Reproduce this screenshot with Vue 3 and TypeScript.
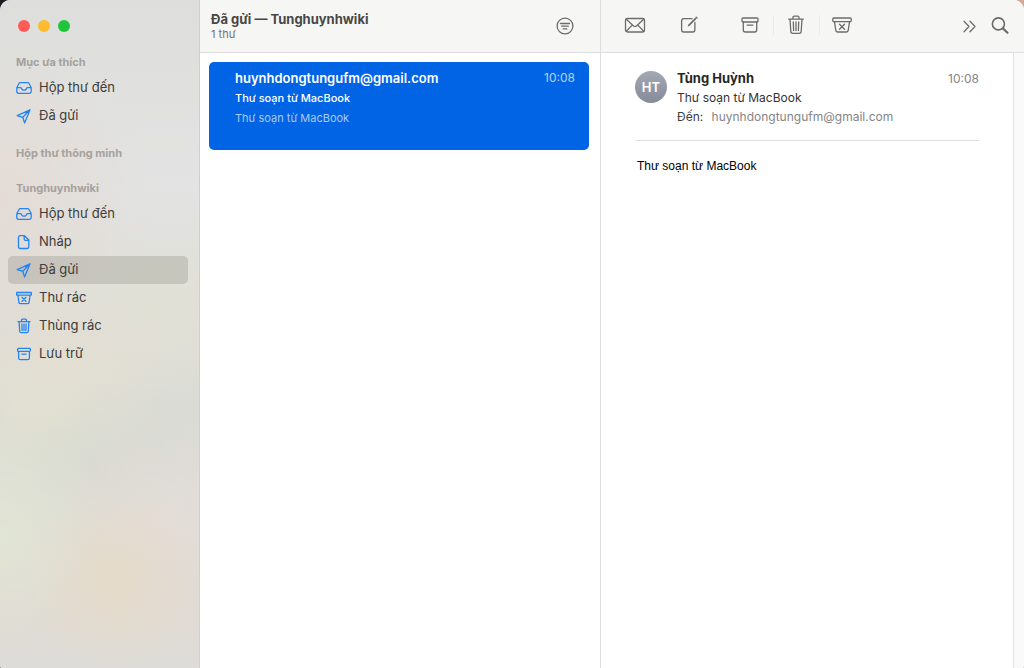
<script setup lang="ts">
import { ref } from 'vue'

type IconName = 'inbox' | 'doc' | 'plane' | 'junk' | 'trash' | 'archive'

interface Mailbox {
  id: string
  label: string
  icon: IconName
}

interface Section {
  title: string
  items: Mailbox[]
}

const selected = ref('sent')

const sections: Section[] = [
  {
    title: 'Mục ưa thích',
    items: [
      { id: 'fav-inbox', label: 'Hộp thư đến', icon: 'inbox' },
      { id: 'fav-sent', label: 'Đã gửi', icon: 'plane' },
    ],
  },
  { title: 'Hộp thư thông minh', items: [] },
  {
    title: 'Tunghuynhwiki',
    items: [
      { id: 'inbox', label: 'Hộp thư đến', icon: 'inbox' },
      { id: 'drafts', label: 'Nháp', icon: 'doc' },
      { id: 'sent', label: 'Đã gửi', icon: 'plane' },
      { id: 'junk', label: 'Thư rác', icon: 'junk' },
      { id: 'trash', label: 'Thùng rác', icon: 'trash' },
      { id: 'archive', label: 'Lưu trữ', icon: 'archive' },
    ],
  },
]

const icons: Record<IconName, string> = {
  inbox: 'M.8 7.700 2.800 3.800Q3.300 2.700 4.500 2.700h7q1.200 0 1.700 1.100L15.200 7.700v3.900q0 1.700-1.700 1.700h-11q-1.700 0-1.700-1.700zM.9 7.700h3.500q.9 0 1.100.8.5 1.700 2.500 1.700t2.500-1.700q.2-.8 1.100-.8h3.500',
  doc: 'M4.200 1.700h4.300l4.300 4.300v6.800q0 1.700-1.700 1.700H4.200q-1.700 0-1.700-1.700V3.400q0-1.700 1.700-1.700zM8.200 1.900v3.200q0 1.200 1.200 1.200h3.200',
  plane: 'M14 1.800 1.200 7.600l5.600 1.700L8.600 15zM14 1.800 6.800 9.300',
  junk: 'M1.200 2.500h13.600q.6 0 .6.600v1.500q0 .6-.6.600H1.200q-.6 0-.6-.6V3.100q0-.6.6-.6zM2 5.300l.9 7q.2 1.300 1.500 1.300h7.200q1.300 0 1.500-1.300l.9-7M6 7.300l4 4M10 7.300l-4 4',
  trash: 'M2 3.600h12M5.500 3.400V2.200q0-1 1-1h3q1 0 1 1v1.200M3.100 3.800l.6 9.400q.1 1.500 1.500 1.500h5.600q1.400 0 1.500-1.500l.6-9.400M5.900 5.800l.2 6.800M8 5.800v6.800M10.100 5.800l-.2 6.800',
  archive: 'M2.400 2.400h11.200q.8 0 .8.800v1.400q0 .8-.8.800H2.400q-.8 0-.8-.8V3.200q0-.8.8-.8zM2.600 5.500v6.400q0 1.700 1.700 1.700h7.400q1.700 0 1.700-1.700V5.500M5.900 8.100h4.200',
}
</script>

<template>
  <div class="window">
    <aside class="sidebar">
      <div class="lights">
        <button class="light close" aria-label="Đóng"></button>
        <button class="light minimize" aria-label="Thu nhỏ"></button>
        <button class="light expand" aria-label="Phóng to"></button>
      </div>
      <nav>
        <section v-for="section in sections" :key="section.title" class="section">
          <h2>{{ section.title }}</h2>
          <button
            v-for="item in section.items"
            :key="item.id"
            class="mailbox"
            :class="{ active: item.id === selected }"
            @click="selected = item.id"
          >
            <svg viewBox="0 0 16 16" width="16" height="16" aria-hidden="true">
              <path :d="icons[item.icon]" />
            </svg>
            <span>{{ item.label }}</span>
          </button>
        </section>
      </nav>
    </aside>

    <section class="list">
      <header class="bar list-bar">
        <div>
          <h1>Đã gửi — Tunghuynhwiki</h1>
          <p class="count">1 thư</p>
        </div>
        <button class="tool" aria-label="Lọc">
          <svg viewBox="0 0 20 20" width="20" height="20">
            <circle cx="10" cy="10" r="7.900" />
            <path d="M5.500 7.500h9M6.700 10.200h6.600M8.200 12.900h3.600" />
          </svg>
        </button>
      </header>
      <article class="message">
        <div class="row">
          <h3>huynhdongtungufm@gmail.com</h3>
          <time>10:08</time>
        </div>
        <p class="subject">Thư soạn từ MacBook</p>
        <p class="preview">Thư soạn từ MacBook</p>
      </article>
    </section>

    <main class="reader">
      <header class="bar tools">
        <button class="tool mail" aria-label="Nhận thư">
          <svg viewBox="0 0 22 20" width="22" height="20">
            <rect x="1.500" y="3.500" width="19" height="13.500" rx="2" />
            <path d="M2.300 4.300l7.300 6.700q1.400 1.100 2.800 0l7.300-6.700M2.300 16.300l5.900-6.200M19.700 16.300l-5.900-6.200" />
          </svg>
        </button>
        <button class="tool compose" aria-label="Soạn thư">
          <svg viewBox="0 0 20 20" width="20" height="20">
            <path d="M13 3.700H4.800Q2.600 3.700 2.600 5.900v8.900q0 2.200 2.200 2.200h8.900q2.200 0 2.200-2.200V7.500" />
            <path d="M8.600 11.600l.6-1.800 7.200-7.200 1.200 1.200-7.200 7.200z" fill="#6c6c6b" stroke="none" />
            <path d="M17.200 2.100l1 1" />
          </svg>
        </button>
        <div class="group">
          <button class="tool" aria-label="Lưu trữ">
            <svg viewBox="0 0 20 20" width="20" height="20">
              <rect x="2" y="3" width="16" height="4" rx="1" />
              <path d="M3.300 7v8q0 2 2 2h9.400q2 0 2-2V7M7.200 10.200h5.600" />
            </svg>
          </button>
          <button class="tool" aria-label="Xoá">
            <svg viewBox="0 0 20 20" width="20" height="20">
              <path d="M2.700 4.200h14.600M7 4V2.400q0-1.300 1.300-1.300h3.400q1.300 0 1.300 1.300V4M4 4.300l.8 12q.1 2 2 2h6.400q1.900 0 2-2L16 4.300M7.300 7l.3 8.600M10 7v8.600M12.700 7l-.3 8.600" />
            </svg>
          </button>
          <button class="tool" aria-label="Thư rác">
            <svg viewBox="0 0 20 20" width="20" height="20">
              <rect x=".8" y="3" width="18.400" height="3.700" rx="1" />
              <path d="M2.500 6.900l1.300 8.400q.3 1.700 2 1.700h8.400q1.700 0 2-1.700l1.300-8.400M7.500 9.200l5 5M12.500 9.200l-5 5" />
            </svg>
          </button>
        </div>
        <button class="tool more" aria-label="Thêm">
          <svg viewBox="0 0 20 20" width="20" height="20">
            <path d="M4 6.300l5 5.200-5 5.200M10 6.300l5 5.200-5 5.200" />
          </svg>
        </button>
        <button class="tool search" aria-label="Tìm kiếm">
          <svg viewBox="0 0 20 20" width="20" height="20">
            <circle cx="8.400" cy="8.900" r="6" class="thick" />
            <path d="M12.900 13.400l4.600 4.300" class="handle" />
          </svg>
        </button>
      </header>
      <div class="content">
        <article class="mail-view">
          <header class="mail-head">
            <div class="avatar">HT</div>
            <div class="details">
              <h2>Tùng Huỳnh</h2>
              <p class="title">Thư soạn từ MacBook</p>
              <p class="to">Đến: <a href="mailto:huynhdongtungufm@gmail.com">huynhdongtungufm@gmail.com</a></p>
            </div>
            <time>10:08</time>
          </header>
          <p class="body">Thư soạn từ MacBook</p>
        </article>
        <div class="gutter"></div>
      </div>
    </main>
  </div>
</template>

<style>
body {
  background: linear-gradient(90deg, #1c1b20 50%, #d3a996 50%);
}
</style>

<style scoped>
* {
  box-sizing: border-box;
  margin: 0;
  padding: 0;
}

button {
  border: 0;
  background: none;
  font: inherit;
  color: inherit;
}

svg {
  display: block;
  flex: none;
  fill: none;
  stroke: currentColor;
  stroke-width: 1.3;
  stroke-linecap: round;
  stroke-linejoin: round;
}

.window {
  display: grid;
  grid-template-columns: 200px 400px minmax(0, 1fr);
  min-height: 100vh;
  overflow: hidden;
  border-radius: 10px 10px 2px 2px;
  background: #fff;
  color: #3c3c3a;
  font-family: Inter, "Noto Sans", sans-serif;
  font-size: 13px;
}

.sidebar {
  border-right: 1px solid #cfd0cc;
  background:
    radial-gradient(ellipse 90px 90px at 115px 580px, rgba(230, 219, 197, 0.8), rgba(230, 219, 197, 0)),
    radial-gradient(ellipse 110px 120px at 0 535px, rgba(225, 230, 212, 0.9), rgba(225, 230, 212, 0)),
    radial-gradient(ellipse 110px 80px at 150px 520px, rgba(230, 221, 216, 0.7), rgba(230, 221, 216, 0)),
    radial-gradient(ellipse 110px 90px at 95px 470px, rgba(215, 217, 208, 0.8), rgba(215, 217, 208, 0)),
    radial-gradient(ellipse 110px 90px at 50px 415px, rgba(227, 226, 210, 0.9), rgba(227, 226, 210, 0)),
    radial-gradient(ellipse 130px 70px at 50px 365px, rgba(230, 221, 211, 0.8), rgba(230, 221, 211, 0)),
    radial-gradient(ellipse 140px 90px at 150px 315px, rgba(226, 225, 213, 0.8), rgba(226, 225, 213, 0)),
    radial-gradient(ellipse 150px 170px at 0 200px, rgba(228, 218, 211, 0.9), rgba(228, 218, 211, 0)),
    linear-gradient(180deg, #dedfdc 0, #e2e3e2 28%, #dfdfd9 45%, #dadbd5 60%, #dfdcd8 75%, #e0dad5 92%, #dddcd8 100%);
}

.lights {
  display: flex;
  align-items: center;
  gap: 8px;
  height: 52px;
  padding-left: 18px;
}

.light {
  width: 12px;
  height: 12px;
  border-radius: 50%;
}

.close { background: #fc5b57; }
.minimize { background: #fdbb2e; }
.expand { background: #1fc63c; }

.section {
  padding: 0 11px 13px 8px;
}

.section h2 {
  margin-bottom: 2px;
  padding-left: 8px;
  color: #a5a19d;
  font-size: 11px;
  font-weight: 700;
  line-height: 20px;
}

.mailbox {
  display: flex;
  align-items: center;
  gap: 7px;
  width: 100%;
  height: 28px;
  padding: 0 8px;
  border-radius: 5px;
  line-height: 20px;
  text-align: left;
}

.mailbox span {
  padding-bottom: 2px;
}

.mailbox svg {
  color: #2384f5;
}

.mailbox.active {
  background: rgba(60, 60, 50, 0.16);
}

.bar {
  display: flex;
  align-items: center;
  height: 53px;
  border-bottom: 1px solid #dedede;
  background: #f6f6f5;
}

.list-bar {
  justify-content: space-between;
  padding: 0 25px 0 11px;
}

h1 {
  color: #474745;
  font-size: 13px;
  font-weight: 700;
  line-height: 16px;
}

.count {
  color: #757573;
  font-size: 11px;
  line-height: 14px;
}

.tool {
  display: block;
  flex: none;
  color: #6c6c6b;
}

.message {
  height: 88px;
  margin: 9px 11px 0 9px;
  padding: 6px 14px 0 26px;
  border-radius: 5px;
  background: #0164e4;
  color: #fff;
}

.row {
  display: flex;
  justify-content: space-between;
  line-height: 20px;
}

.row h3 {
  font-size: 13px;
  font-weight: 600;
}

.row time {
  color: #b8d3f8;
  font-size: 12px;
}

.subject,
.preview {
  font-size: 11px;
  line-height: 20px;
}

.subject {
  font-weight: 500;
}

.preview {
  color: #a9caf6;
}

.reader {
  display: flex;
  flex-direction: column;
  border-left: 1px solid #dcdcdc;
}

.tools {
  padding: 0 14px 2px 23px;
}

.compose {
  margin-left: 33px;
}

.group {
  display: flex;
  align-items: center;
  margin-left: 29px;
}

.group .tool {
  padding: 0 13px 0 12px;
}

.group .tool + .tool {
  border-left: 1px solid #ebebea;
}

.more {
  margin-left: auto;
}

.search {
  margin-left: 10px;
}

.thick {
  stroke-width: 1.6;
}

.handle {
  stroke-width: 2.2;
}

.content {
  display: flex;
  flex: 1;
}

.mail-view {
  flex: 1;
  padding: 16px 34px 0;
}

.mail-head {
  display: flex;
  padding-bottom: 14px;
  border-bottom: 1px solid #e0e0e0;
}

.avatar {
  width: 32px;
  height: 32px;
  margin-top: 2px;
  border-radius: 50%;
  background: linear-gradient(#a4a8b5, #878b99);
  color: #fff;
  font-size: 13px;
  font-weight: 600;
  line-height: 32px;
  text-align: center;
}

.details {
  flex: 1;
  margin-left: 10px;
}

.details h2 {
  color: #262626;
  font-size: 13px;
  font-weight: 700;
  line-height: 19px;
}

.details p {
  font-size: 12px;
  line-height: 19px;
}

.details .title {
  color: #333;
}

.to a {
  margin-left: 5px;
  color: #858585;
  text-decoration: none;
}

.mail-head time {
  color: #858585;
  font-size: 12px;
  line-height: 20px;
}

.body {
  padding: 16px 2px;
  color: #000;
  font-family: "Liberation Sans", Arial, sans-serif;
  font-size: 12px;
  line-height: 18px;
}

.gutter {
  width: 11px;
  border-left: 1px solid #e4e4e4;
  background: #fafafa;
}
</style>
